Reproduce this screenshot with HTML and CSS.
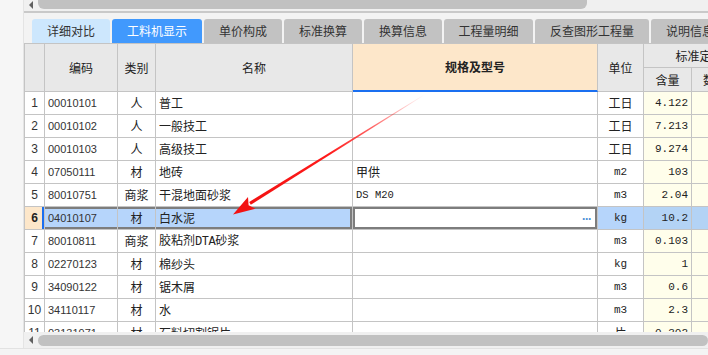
FILE: index.html
```html
<!DOCTYPE html>
<html lang="zh-CN">
<head>
<meta charset="utf-8">
<title>工料机显示</title>
<link rel="stylesheet" href="styles.css">
</head>
<body>
<div class="app">
  <aside class="side"></aside>
  <main class="main">
    <div class="hscroll hscroll-top"><span class="sarrow"></span><span class="thumb"></span></div>
    <nav class="tabs">
      <span class="tab tab-light w78">详细对比</span>
      <span class="tab tab-active w90">工料机显示</span>
      <span class="tab w78">单价构成</span>
      <span class="tab w78">标准换算</span>
      <span class="tab w78">换算信息</span>
      <span class="tab w89">工程量明细</span>
      <span class="tab w114">反查图形工程量</span>
      <span class="tab w78">说明信息</span>
    </nav>
    <div class="grid-wrap">
      <table class="grid">
        <colgroup>
          <col class="c-rn"><col class="c-code"><col class="c-type"><col class="c-name"><col class="c-spec"><col class="c-unit"><col class="c-qty"><col class="c-num">
        </colgroup>
        <thead>
          <tr class="hr1">
            <th rowspan="2" class="rn first"></th>
            <th rowspan="2">编码</th>
            <th rowspan="2">类别</th>
            <th rowspan="2">名称</th>
            <th rowspan="2" class="spec-h">规格及型号</th>
            <th rowspan="2">单位</th>
            <th colspan="2" class="group">标准定额</th>
          </tr>
          <tr class="hr2">
            <th>含量</th>
            <th class="sub-num">数量</th>
          </tr>
        </thead>
        <tbody>
          <tr><td class="rn first">1</td><td class="code">00010101</td><td class="type">人</td><td>普工</td><td class="spec"></td><td class="unit">工日</td><td class="qty">4.122</td><td class="num"></td></tr>
          <tr><td class="rn first">2</td><td class="code">00010102</td><td class="type">人</td><td>一般技工</td><td class="spec"></td><td class="unit">工日</td><td class="qty">7.213</td><td class="num"></td></tr>
          <tr><td class="rn first">3</td><td class="code">00010103</td><td class="type">人</td><td>高级技工</td><td class="spec"></td><td class="unit">工日</td><td class="qty">9.274</td><td class="num"></td></tr>
          <tr><td class="rn first">4</td><td class="code">07050111</td><td class="type">材</td><td>地砖</td><td class="spec">甲供</td><td class="unit mono">m2</td><td class="qty">103</td><td class="num"></td></tr>
          <tr><td class="rn first">5</td><td class="code">80010751</td><td class="type">商浆</td><td>干混地面砂浆</td><td class="spec mono">DS M20</td><td class="unit mono">m3</td><td class="qty">2.04</td><td class="num"></td></tr>
          <tr class="sel"><td class="rn first cur">6</td><td class="code s-tb">04010107</td><td class="type s-tb">材</td><td class="s-tb s-r">白水泥</td><td class="spec edit"><span class="dots">···</span></td><td class="unit mono">kg</td><td class="qty">10.2</td><td class="num"></td></tr>
          <tr><td class="rn first">7</td><td class="code">80010811</td><td class="type">商浆</td><td>胶粘剂<span class="latin">DTA</span>砂浆</td><td class="spec"></td><td class="unit mono">m3</td><td class="qty">0.103</td><td class="num"></td></tr>
          <tr><td class="rn first">8</td><td class="code">02270123</td><td class="type">材</td><td>棉纱头</td><td class="spec"></td><td class="unit mono">kg</td><td class="qty">1</td><td class="num"></td></tr>
          <tr><td class="rn first">9</td><td class="code">34090122</td><td class="type">材</td><td>锯木屑</td><td class="spec"></td><td class="unit mono">m3</td><td class="qty">0.6</td><td class="num"></td></tr>
          <tr><td class="rn first">10</td><td class="code">34110117</td><td class="type">材</td><td>水</td><td class="spec"></td><td class="unit mono">m3</td><td class="qty">2.3</td><td class="num"></td></tr>
          <tr><td class="rn first">11</td><td class="code">03131971</td><td class="type">材</td><td>石料切割锯片</td><td class="spec"></td><td class="unit">片</td><td class="qty">0.302</td><td class="num"></td></tr>
        </tbody>
      </table>
    </div>
    <div class="hscroll hscroll-bottom"><span class="sarrow"></span><span class="thumb"></span></div>
  </main>
</div>
<div class="status"></div>
<svg class="annot" width="708" height="355" viewBox="0 0 708 355" aria-hidden="true">
  <defs>
    <linearGradient id="shaft" gradientUnits="userSpaceOnUse" x1="424" y1="95" x2="250" y2="203">
      <stop offset="0" stop-color="#ff2020" stop-opacity="0"/>
      <stop offset="0.3" stop-color="#ff2020" stop-opacity="0.7"/>
      <stop offset="0.55" stop-color="#ff1a1a" stop-opacity="1"/>
      <stop offset="1" stop-color="#f21212" stop-opacity="1"/>
    </linearGradient>
  </defs>
  <polygon points="424.2,95.3 423.8,94.7 249.2,202.0 250.8,204.8" fill="url(#shaft)"/>
  <polygon points="233,214.5 255.4,208.7 248.6,205.2 248.0,196.9" fill="#f21212"/>
</svg>
</body>
</html>
```
FILE: styles.css
```css
html, body {
  margin: 0;
  padding: 0;
}
body {
  width: 708px;
  height: 355px;
  overflow: hidden;
  background: #f4f4f4;
  font-family: "Noto Sans CJK SC", "Noto Sans", sans-serif;
  font-size: 12px;
  color: #222;
  position: relative;
}
.app {
  display: flex;
  height: 348px;
}
.side {
  width: 23px;
  flex: none;
  background: #f6f6f6;
  border-right: 1px solid #e4e4e4;
}
.main {
  flex: 1;
  min-width: 0;
  display: flex;
  flex-direction: column;
  overflow: hidden;
  background: #f3f3f3;
}
.hscroll {
  position: relative;
  display: flex;
  align-items: center;
  background: #f0f0f0;
  flex: none;
}
.hscroll-top {
  height: 11px;
  align-items: flex-start;
  border-bottom: 2px solid #c9c9c9;
  margin-bottom: 6px;
}
.hscroll-bottom {
  height: 16px;
}
.sarrow {
  width: 0;
  height: 0;
  margin-left: 5px;
  border-top: 4px solid transparent;
  border-bottom: 4px solid transparent;
  border-right: 4px solid #606060;
}
.hscroll-top .sarrow {
  margin-top: 1px;
}
.thumb {
  flex: 1;
  margin-left: 5px;
  background: #c1c1c1;
  border-radius: 6px;
  height: 11px;
}
.hscroll-top .thumb {
  height: 10px;
  border-radius: 0 0 6px 6px;
  margin-right: 121px;
  margin-top: -1px;
}
.tabs {
  display: flex;
  gap: 2px;
  height: 24px;
  padding-left: 8px;
  flex: none;
}
.tab {
  flex: none;
  display: flex;
  align-items: center;
  justify-content: center;
  height: 24px;
  background: #c2c2c2;
  color: #333;
  border-radius: 3px 3px 0 0;
  line-height: 16px;
  white-space: nowrap;
}
.tab-light { background: #cde7fd; }
.tab-active { background: #4199fd; color: #fff; }
.w78 { width: 78px; }
.w89 { width: 89px; }
.w90 { width: 90px; }
.w114 { width: 114px; }

.grid-wrap {
  height: 289px;
  overflow: hidden;
  background: #fff;
  flex: none;
}
.grid {
  border-collapse: separate;
  border-spacing: 0;
  table-layout: fixed;
  width: 716px;
}
.c-rn { width: 21px; }
.c-code { width: 73px; }
.c-type { width: 38px; }
.c-name { width: 197px; }
.c-spec { width: 245px; }
.c-unit { width: 46px; }
.c-qty { width: 48px; }
.c-num { width: 48px; }

.grid th, .grid td {
  box-sizing: border-box;
  border-right: 1px solid #c4c4c4;
  border-bottom: 1px solid #c4c4c4;
  padding: 0 3px;
  white-space: nowrap;
  overflow: hidden;
  line-height: 16px;
}
.grid .first { border-left: 1px solid #c4c4c4; }
.grid th {
  background: #e8e8e8;
  font-weight: normal;
  color: #222;
  text-align: center;
}
.hr1 { height: 25px; }
.hr1 th { border-top: 1px solid #c4c4c4; }
.hr2 { height: 24px; }
.grid th.spec-h {
  background: #fde7ca;
  font-weight: bold;
  border-bottom: 2px solid #1a6ff0;
}
.grid th.group {
  padding-left: 19px;
}
.grid th.sub-num {
  text-align: left;
  padding-left: 11px;
}
.grid tbody tr { height: 23px; }
.grid td { background: #fff; }
.grid td.rn {
  background: #fff;
  text-align: center;
  padding: 0;
  font-family: "Liberation Sans", Arial, sans-serif;
  font-size: 12px;
  color: #333;
}
.code {
  font-family: "Liberation Sans", Arial, sans-serif;
  font-size: 11px;
  color: #333;
  padding-left: 2px;
}
.type, .unit { text-align: center; }
.mono, .qty {
  font-family: "Liberation Mono", "DejaVu Sans Mono", monospace;
  font-size: 11px;
}
.spec.mono { font-size: 10.5px; }
.latin {
  font-family: "Liberation Mono", monospace;
  font-size: 12px;
  letter-spacing: -0.5px;
}
.grid td.qty {
  text-align: right;
  background: #fffeeb;
  color: #222;
}
.grid td.num { background: #fffeeb; }

.sel td { background: #b6d5fb; }
.grid .sel td.qty, .grid .sel td.num { background: #b3d3f5; }
.grid td.cur {
  background: #fde7ca;
  font-weight: bold;
  color: #222;
  box-shadow: inset -2px 0 #1a6ff0;
}
.sel td.s-tb { box-shadow: inset 0 2px #7d7d7d, inset 0 -2px #7d7d7d; }
.sel td.s-tb.s-r { box-shadow: inset 0 2px #7d7d7d, inset 0 -2px #7d7d7d, inset -2px 0 #7d7d7d; }
.grid .sel td.edit {
  background: #fff;
  box-shadow: inset 0 0 0 2px #7d7d7d;
  text-align: right;
  padding-right: 6px;
}
.dots {
  color: #4a8fd6;
  font-family: "Liberation Sans", Arial, sans-serif;
  font-weight: bold;
  font-size: 12px;
  letter-spacing: -1px;
}

.status {
  height: 7px;
  background: #f4f4f4;
  border-top: 1px solid #e2e2e2;
  box-sizing: border-box;
}
.annot {
  position: absolute;
  left: 0;
  top: 0;
  pointer-events: none;
}
```
